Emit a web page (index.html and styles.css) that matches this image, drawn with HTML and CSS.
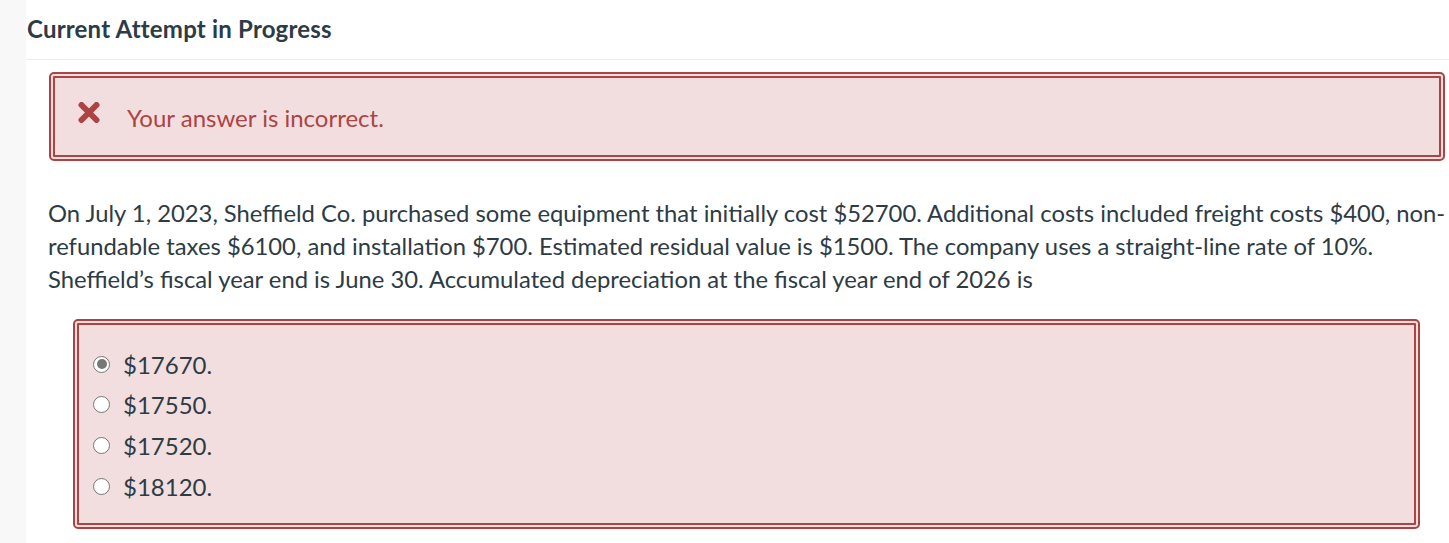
FILE: index.html
```html
<!DOCTYPE html>
<html>
<head>
<meta charset="utf-8">
<link rel="stylesheet" href="styles.css">
</head>
<body>
<div class="page">
  <div class="rail"></div>
  <main class="main">
    <h1 class="title">Current Attempt in Progress</h1>
    <div class="feedback">
      <svg class="xicon" width="22" height="21" viewBox="0 0 22 21" aria-hidden="true">
        <path d="M3.5 3 L18.5 18 M18.5 3 L3.5 18" stroke="#ad4444" stroke-width="6" stroke-linecap="round"/>
      </svg>
      <span class="feedback-text">Your answer is incorrect.</span>
    </div>
    <p class="question">On July 1, 2023, Sheffield Co. purchased some equipment that initially cost $52700. Additional costs included freight costs $400, non-<wbr>refundable taxes $6100, and installation $700. Estimated residual value is $1500. The company uses a straight-line rate of 10%. Sheffield’s fiscal year end is June 30. Accumulated depreciation at the fiscal year end of 2026 is</p>
    <div class="answers">
      <label class="opt"><span class="radio checked"></span>$17670.</label>
      <label class="opt"><span class="radio"></span>$17550.</label>
      <label class="opt"><span class="radio"></span>$17520.</label>
      <label class="opt"><span class="radio"></span>$18120.</label>
    </div>
  </main>
</div>
</body>
</html>
```
FILE: styles.css
```css
html, body { margin: 0; padding: 0; background: #fff; }
body { font-family: Lato, "Open Sans", sans-serif; color: #2d3b45; }
.page { display: flex; min-height: 543px; }
.rail { width: 26px; flex: none; background: #f8f8f8; }
.main { flex: 1; min-width: 0; }
.title {
  margin: 0;
  height: 60px;
  box-sizing: border-box;
  padding: 14px 0 0 1px;
  font-size: 24px;
  font-weight: 700;
  line-height: 30px;
  letter-spacing: 0.2px;
  color: #2d3b45;
  border-bottom: 1px solid #ececec;
}
.feedback {
  margin: 12px 4px 0 23px;
  height: 89px;
  box-sizing: border-box;
  border: 6px double #ad4444;
  border-radius: 5px;
  background: #f2dedf;
  display: flex;
  align-items: center;
  padding-left: 23px;
}
.xicon { flex: none; margin-right: 27px; margin-top: -8px; }
.feedback-text { font-size: 24px; color: #ad4444; margin-top: 2px; }
.question {
  margin: 36px 0 0 22px;
  font-size: 23.8px;
  line-height: 33px;
  color: #2d3b45;
}
.answers {
  margin: 23px 29px 0 47px;
  height: 210px;
  box-sizing: border-box;
  border: 6px double #ad4444;
  border-radius: 5px;
  background: #f2dedf;
  padding: 19px 0 0 14px;
  display: flex;
  flex-direction: column;
}
.opt {
  display: flex;
  align-items: center;
  height: 40.6px;
  font-size: 24px;
  color: #2d3b45;
}
.radio {
  width: 15px;
  height: 15px;
  border: 1px solid #767676;
  border-radius: 50%;
  background: #fff;
  margin-right: 13px;
  box-sizing: content-box;
  position: relative;
  flex: none;
}
.radio.checked::after {
  content: "";
  position: absolute;
  left: 2.5px; top: 2.5px;
  width: 10px; height: 10px;
  border-radius: 50%;
  background: #777;
}
```
